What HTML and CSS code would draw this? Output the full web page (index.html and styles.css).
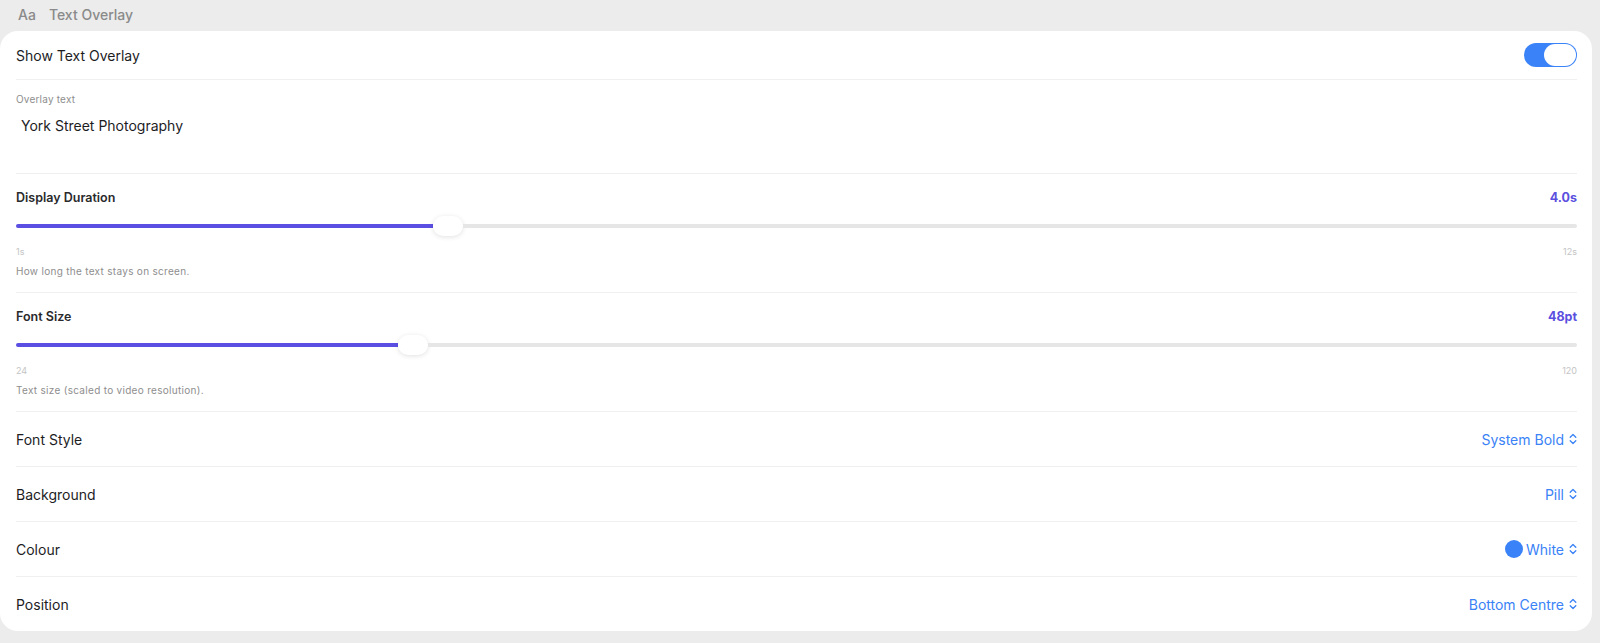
FILE: index.html
```html
<!DOCTYPE html>
<html lang="en">
<head>
    <meta charset="UTF-8">
    <meta name="viewport" content="width=device-width, initial-scale=1.0">
    <title>Text Overlay</title>
    <link rel="stylesheet" href="styles.css">
</head>
<body>
    <div class="header"><span class="aa">Aa</span><span>Text Overlay</span></div>
    <div class="card">
        <div class="row toggle-row">
            <span>Show Text Overlay</span>
            <div class="toggle"><div class="knob"></div></div>
        </div>
        <div class="field">
            <div class="field-label">Overlay text</div>
            <div class="field-input">York Street Photography</div>
        </div>
        <div class="slider-block">
            <div class="slider-head"><span>Display Duration</span><span class="slider-value">4.0s</span></div>
            <div class="slider">
                <div class="fill" style="width: 417px"></div>
                <div class="thumb"></div>
                <div class="rest"></div>
            </div>
            <div class="ticks"><span>1s</span><span>12s</span></div>
            <div class="help">How long the text stays on screen.</div>
        </div>
        <div class="slider-block">
            <div class="slider-head"><span>Font Size</span><span class="slider-value">48pt</span></div>
            <div class="slider">
                <div class="fill" style="width: 382px"></div>
                <div class="thumb"></div>
                <div class="rest"></div>
            </div>
            <div class="ticks"><span>24</span><span>120</span></div>
            <div class="help">Text size (scaled to video resolution).</div>
        </div>
        <div class="row select-row">
            <span>Font Style</span>
            <span class="picker">System Bold <svg class="chev" viewBox="0 0 8 12"><path d="M1.2 4.3 L4 1.5 L6.8 4.3 M1.2 7.7 L4 10.5 L6.8 7.7"/></svg></span>
        </div>
        <div class="row select-row">
            <span>Background</span>
            <span class="picker">Pill <svg class="chev" viewBox="0 0 8 12"><path d="M1.2 4.3 L4 1.5 L6.8 4.3 M1.2 7.7 L4 10.5 L6.8 7.7"/></svg></span>
        </div>
        <div class="row select-row">
            <span>Colour</span>
            <span class="picker"><span class="swatch"></span>White <svg class="chev" viewBox="0 0 8 12"><path d="M1.2 4.3 L4 1.5 L6.8 4.3 M1.2 7.7 L4 10.5 L6.8 7.7"/></svg></span>
        </div>
        <div class="row select-row last">
            <span>Position</span>
            <span class="picker">Bottom Centre <svg class="chev" viewBox="0 0 8 12"><path d="M1.2 4.3 L4 1.5 L6.8 4.3 M1.2 7.7 L4 10.5 L6.8 7.7"/></svg></span>
        </div>
    </div>
</body>
</html>
```

FILE: styles.css
```css
* {
    margin: 0;
    padding: 0;
    box-sizing: border-box;
}
body {
    font-family: 'Inter', 'Noto Sans', sans-serif;
    background-color: #ececec;
    color: #1d1d1f;
    height: 643px;
    overflow: hidden;
}
.header {
    display: flex;
    align-items: center;
    gap: 13px;
    height: 31px;
    padding: 0 0 3px 18px;
    color: #8a8a8a;
    font-size: 14px;
    font-weight: 500;
}
.card {
    background: #ffffff;
    margin-right: 8px;
    border-radius: 18px;
    padding: 0 15px 0 16px;
}
.row {
    display: flex;
    align-items: center;
    justify-content: space-between;
    font-size: 14px;
    border-bottom: 1px solid #f0f0f0;
}
.toggle-row {
    height: 49px;
}
.toggle {
    width: 53px;
    height: 24px;
    border-radius: 12px;
    background: #3a82f7;
    display: flex;
    justify-content: flex-end;
    padding: 1px;
}
.knob {
    width: 32px;
    height: 22px;
    border-radius: 11px;
    background: #ffffff;
}
.field {
    height: 94px;
    padding-top: 13px;
    border-bottom: 1px solid #f0f0f0;
}
.field-label {
    font-size: 10px;
    line-height: 12px;
    color: #8e8e8e;
    letter-spacing: 0.2px;
}
.field-input {
    margin-top: 4px;
    padding: 7px 5px 5px;
    font-size: 14px;
    line-height: 20px;
}
.slider-block {
    padding: 16px 0 14px;
    border-bottom: 1px solid #f0f0f0;
}
.slider-head {
    display: flex;
    justify-content: space-between;
    font-size: 12.5px;
    line-height: 16px;
    font-weight: 600;
    color: #2a2a2c;
}
.slider-value {
    color: #5b4fe0;
    font-weight: 700;
}
.slider {
    display: flex;
    align-items: center;
    height: 20px;
    margin-top: 10px;
}
.fill {
    height: 4px;
    border-radius: 2px 0 0 2px;
    background: #5b4fe3;
}
.thumb {
    width: 30px;
    height: 20px;
    border-radius: 10px;
    background: #ffffff;
    box-shadow: 0 1px 5px rgba(0, 0, 0, 0.12);
}
.rest {
    flex: 1;
    height: 4px;
    border-radius: 0 2px 2px 0;
    background: #e6e6e6;
}
.ticks {
    display: flex;
    justify-content: space-between;
    margin-top: 10px;
    font-size: 9px;
    line-height: 12px;
    color: #c4c4c4;
}
.help {
    margin-top: 6px;
    font-size: 10px;
    line-height: 14px;
    color: #8e8e8e;
    letter-spacing: 0.3px;
}
.select-row {
    height: 55px;
}
.select-row.last {
    height: 54px;
    border-bottom: none;
}
.picker {
    display: flex;
    align-items: center;
    color: #3a82f6;
    font-size: 14px;
}
.swatch {
    width: 18px;
    height: 18px;
    border-radius: 50%;
    background: #3a82f7;
    margin-right: 3px;
}
.chev {
    width: 8px;
    height: 12px;
    margin-left: 5px;
    fill: none;
    stroke: #3a82f6;
    stroke-width: 1.3;
    stroke-linecap: round;
    stroke-linejoin: round;
}
```
